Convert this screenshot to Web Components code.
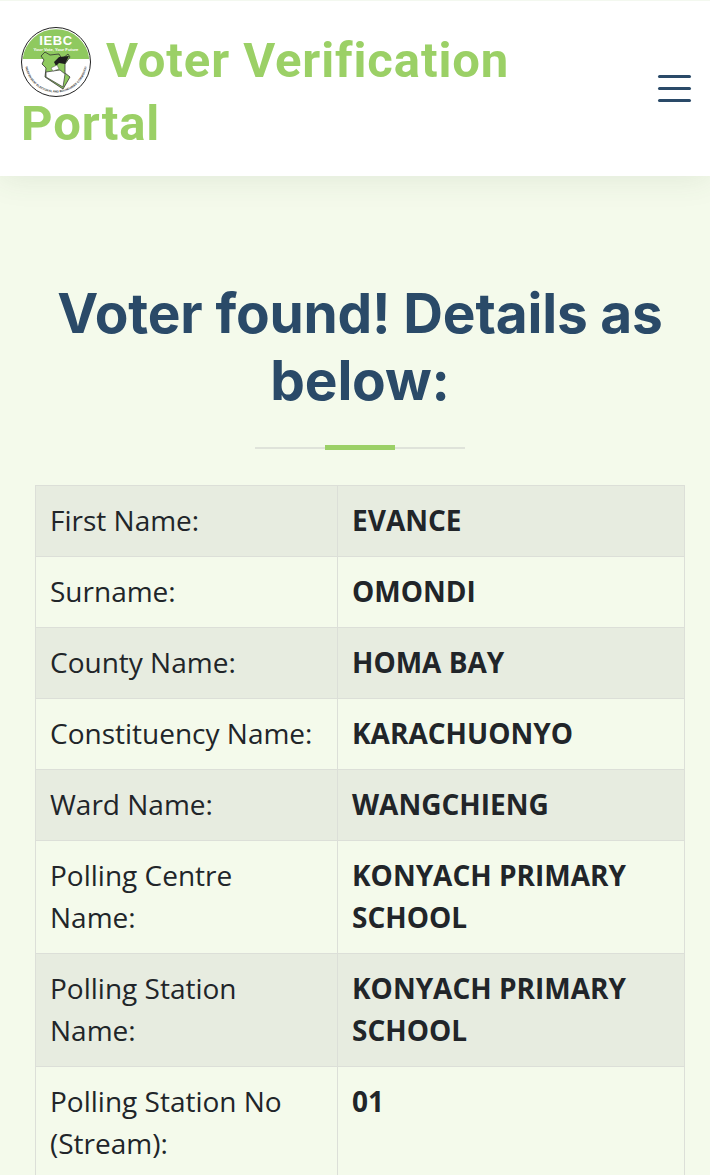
<!DOCTYPE html>
<html><head><meta charset="utf-8"><style>
html,body{margin:0;padding:0;background:#f4faeb;height:1175px;overflow:hidden}
</style></head><body>
<voter-page>
<site-header title-text="Voter Verification Portal"></site-header>
<section-title>Voter found! Details as below:</section-title>
<voter-table>
<voter-row label="First Name:" value="EVANCE"></voter-row>
<voter-row label="Surname:" value="OMONDI"></voter-row>
<voter-row label="County Name:" value="HOMA BAY"></voter-row>
<voter-row label="Constituency Name:" value="KARACHUONYO"></voter-row>
<voter-row label="Ward Name:" value="WANGCHIENG"></voter-row>
<voter-row label="Polling Centre Name:" value="KONYACH PRIMARY SCHOOL"></voter-row>
<voter-row label="Polling Station Name:" value="KONYACH PRIMARY SCHOOL"></voter-row>
<voter-row label="Polling Station No (Stream):" value="01"></voter-row>
</voter-table>
</voter-page>
<script>
function def(name,html,init){customElements.define(name,class extends HTMLElement{connectedCallback(){if(this.shadowRoot)return;const r=this.attachShadow({mode:'open'});r.innerHTML=html;if(init)init(this,r)}})}
def('voter-page',`<style>:host{display:block;width:710px;height:1175px;overflow:hidden;background:#f4faeb}</style><slot></slot>`);
def('iebc-logo',`<style>:host{display:inline-block;width:70px;height:70px;vertical-align:-12px;margin:-6px 15px -8px 0}svg{display:block}text{font-family:"Liberation Sans",sans-serif;letter-spacing:0}</style>
<svg viewBox="0 0 70 70" width="70" height="70">
<circle cx="35" cy="35" r="34.5" fill="#fff" stroke="#222" stroke-width="1"/>
<path d="M1.7 32A33.5 33.5 0 0 1 68.3 32Z" fill="#8fc95f"/>
<text x="35" y="17.5" text-anchor="middle" font-size="13" font-weight="700" style="letter-spacing:.6px" fill="#fff">IEBC</text>
<text x="35" y="23.5" text-anchor="middle" font-size="4.2" font-weight="700" fill="#fff">Your Vote, Your Future</text>
<path d="M20 29 24 25 29 28 38 27 41 32 47 27 49 30 44 37 44 46 49 50 42 62 24 50 25 41 21 37 23 33Z" fill="#8fc95f" stroke="#333" stroke-width=".8"/>
<path d="M25 45 39 43 44 47 42 60 25 50Z" fill="#fff" stroke="#333" stroke-width=".7"/>
<path d="M33 35 38 30 48 29 44 37 38 36 35 39Z" fill="#1d1d1d"/>
<path d="M30 41 36 38 38 42 32 44Z" fill="#fff" stroke="#333" stroke-width=".4"/>
<path id="arc" d="M4.2 38A31 31 0 0 0 65.8 38" fill="none"/>
<text font-size="2.9" font-weight="700" fill="#333"><textPath href="#arc" startOffset="50%" text-anchor="middle">INDEPENDENT ELECTORAL AND BOUNDARIES COMMISSION</textPath></text>
</svg>`);
def('site-header',`<style>:host{display:flex;align-items:center;justify-content:space-between;box-sizing:border-box;height:176px;padding:0 19px 0 21px;background:#fff;border-top:1px solid #f3f8ef;box-shadow:0 3px 30px rgba(60,90,60,.10);position:relative}
h1{margin:0;padding-top:7px;width:560px;font:700 49px/63px Roboto,sans-serif;letter-spacing:.9px;color:#9bd066}
button{all:unset;display:flex;flex-direction:column;gap:9px}
i{display:block;width:33px;height:3px;border-radius:2px;background:#2a4a68}</style>
<h1><iebc-logo></iebc-logo><span id="t"></span></h1><button aria-label="Menu"><i></i><i></i><i></i></button>`,(h,r)=>{r.getElementById('t').textContent=h.getAttribute('title-text')});
def('section-title',`<style>:host{display:block;padding:104px 25px 36px 35px;text-align:center}
h2{margin:0;font:700 55px/67px Inter,sans-serif;letter-spacing:-.18px;color:#2a4a68}
.rule{position:relative;width:210px;height:2px;margin:33px auto 0;background:#dfe3da}
.rule b{position:absolute;left:70px;top:-2px;width:70px;height:5px;background:#9bd066}</style>
<h2><slot></slot></h2><div class="rule"><b></b></div>`);
def('voter-table',`<style>:host{display:block;margin:0 25px 0 35px;border:1px solid #dcdfd8;border-bottom:0}</style><slot></slot>`);
def('voter-row',`<style>:host{display:grid;grid-template-columns:302px 1fr;border-bottom:1px solid #dcdfd8;font:28px/42px "Open Sans",sans-serif;color:#212529}
:host(:nth-child(odd)){background:#e7ece0}
div{padding:13px 14px 15px}
.l{border-right:1px solid #dcdfd8}
.v{font-weight:700}</style><div class="l" id="l"></div><div class="v" id="v"></div>`,(h,r)=>{r.getElementById('l').textContent=h.getAttribute('label');r.getElementById('v').textContent=h.getAttribute('value')});
</script>
</body></html>
